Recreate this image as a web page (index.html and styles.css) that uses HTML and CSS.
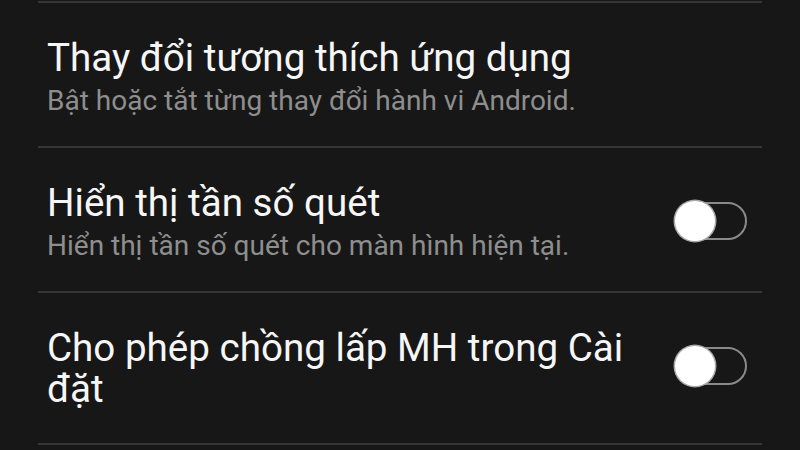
FILE: index.html
```html
<!DOCTYPE html>
<html lang="vi">
<head>
<meta charset="utf-8">
<link rel="stylesheet" href="styles.css">
</head>
<body>
<div class="list">
  <div class="row">
    <div class="text">
      <div class="title">Thay đổi tương thích ứng dụng</div>
      <div class="sub">Bật hoặc tắt từng thay đổi hành vi Android.</div>
    </div>
  </div>
  <div class="row">
    <div class="text">
      <div class="title">Hiển thị tần số quét</div>
      <div class="sub">Hiển thị tần số quét cho màn hình hiện tại.</div>
    </div>
    <div class="switch up"><span class="thumb"></span></div>
  </div>
  <div class="row tall">
    <div class="text">
      <div class="title">Cho phép chồng lấp MH trong Cài đặt</div>
    </div>
    <div class="switch up"><span class="thumb"></span></div>
  </div>
</div>
</body>
</html>
```
FILE: styles.css
```css
html, body {
  margin: 0;
  padding: 0;
  background: #171717;
  font-family: Roboto, "Noto Sans", sans-serif;
  overflow: hidden;
}
.list {
  margin: 1px 38px 0 38px;
  border-top: 2px solid #363636;
}
.row {
  display: flex;
  align-items: center;
  justify-content: space-between;
  padding: 34px 15px 28px 9px;
  border-bottom: 2px solid #363636;
}
.tall {
  padding-bottom: 34px;
}
.text {
  flex: 1;
  min-width: 0;
  margin-right: 24px;
}
.title {
  color: #f6f6f6;
  font-size: 38.6px;
  line-height: 41px;
}
.sub {
  color: #8e8e8e;
  font-size: 28px;
  line-height: 34px;
  margin-top: 6px;
}
.switch {
  position: relative;
  width: 68px;
  height: 34px;
  border: 2px solid #8a8a8a;
  border-radius: 19px;
  flex: none;
}
.up {
  margin-top: -4px;
}
.thumb {
  position: absolute;
  left: -2px;
  top: 50%;
  width: 40px;
  height: 40px;
  margin-top: -20px;
  border-radius: 50%;
  background: #fff;
  box-shadow: 0 0 0 1.5px #a8a8a8;
}
```
